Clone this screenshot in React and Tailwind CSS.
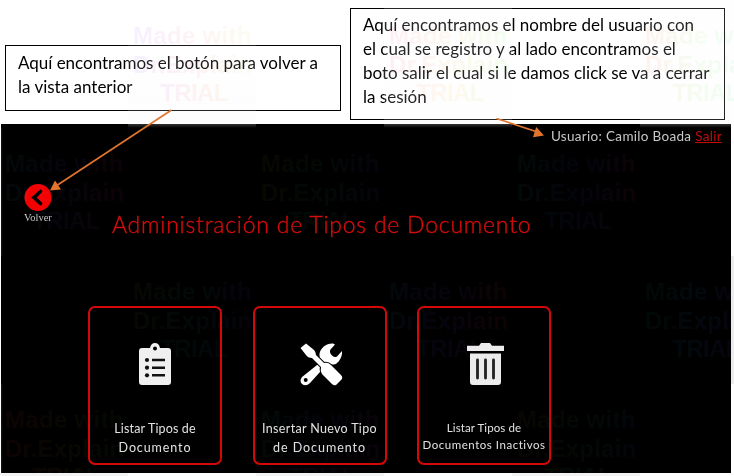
import React from 'react';

const marks = [
  'left-[133px] top-[22px] from-[#e9d8ff] via-[#ffe0e4] to-[#f4f8d8] opacity-40',
  'left-[389px] top-[22px] from-[#ffd9ec] via-[#fff0d4] to-[#dcffd9] opacity-40',
  'left-[645px] top-[22px] from-[#ffe1d8] via-[#e4ffdc] to-[#d8f0ff] opacity-40',
  'left-[5px] top-[150px] from-[#040b0c] via-[#07060e] to-[#10030a] opacity-80',
  'left-[261px] top-[150px] from-[#0a0a03] via-[#030b07] to-[#06050f] opacity-80',
  'left-[517px] top-[150px] from-[#030c08] via-[#05050f] to-[#10040a] opacity-80',
  'left-[133px] top-[278px] from-[#080b03] via-[#030b0b] to-[#07040f] opacity-80',
  'left-[389px] top-[278px] from-[#030a0e] via-[#090411] to-[#120404] opacity-80',
  'left-[645px] top-[278px] from-[#030c05] via-[#040913] to-[#10030c] opacity-80',
  'left-[5px] top-[406px] from-[#100504] via-[#0a0903] to-[#040c05] opacity-80',
  'left-[261px] top-[406px] from-[#030b08] via-[#05060f] to-[#0e040c] opacity-80',
  'left-[517px] top-[406px] from-[#0c0803] via-[#040b06] to-[#04070f] opacity-80',
];

function Watermark({ place }) {
  return (
    <div className={`absolute w-[122px] bg-linear-to-r bg-clip-text text-center font-['Liberation_Sans',sans-serif] text-[24px] leading-[28.6px] font-bold whitespace-nowrap text-transparent ${place}`}>
      <div className="text-left tracking-[0.3px]">Made with</div>
      <div className="text-left tracking-[0.2px]">Dr.Explain</div>
      <div className="tracking-[-0.6px]">TRIAL</div>
    </div>
  );
}

function Clipboard() {
  return (
    <svg width="32" height="42" viewBox="0 0 32 42">
      <path d="M3 5H11Q12 0 16 0T21 5H29Q32 5 32 8V39Q32 42 29 42H3Q0 42 0 39V8Q0 5 3 5Z" fill="#f0f0f0" />
      <circle cx="16" cy="5.5" r="2" />
      <g fill="#111">
        <circle cx="8" cy="17" r="2.1" /><circle cx="8" cy="24.7" r="2.1" /><circle cx="8" cy="32.3" r="2.1" />
        <path d="M13 15.8h13v2.4H13zM13 23.5h13v2.4H13zM13 31.1h13v2.4H13z" />
      </g>
    </svg>
  );
}

function Tools() {
  return (
    <svg className="ml-[4px]" width="43" height="43" viewBox="0 0 43 43">
      <path d="M33 .5C27 0 20 5 19.5 11C19.3 14 20.2 16 21.5 17.5L26 21Q31 22 36 21C40 18 42.5 13 42 8L37 13.5Q34 15 31.5 12Q29 9 30.5 6.5L35 1.5ZM17 22L2 34Q-1 38 2 41Q6 44 10 40L20 29V22Z" fill="white" />
      <circle cx="5.7" cy="37" r="2" />
      <path d="M6 .5L14 7Q16 9 16 12L24 20Q28 19 31 22L41 32Q43 34 42 36L36 42Q34 43 32 41L22 31Q20 28 21 24L12 15Q8 15 6 12L.5 5Z" fill="white" stroke="black" strokeWidth="2" paintOrder="stroke" />
    </svg>
  );
}

function Trash() {
  return (
    <svg className="ml-[2px]" width="37" height="42" viewBox="0 0 37 42">
      <path d="M0 2.8h12L14 0h9l2 2.8h12V8H0zM3 10.5h31V39q0 3-3 3H6q-3 0-3-3z" fill="#ececec" />
      <path d="M10.500 17v18M18.500 17v18M26.500 17v18" stroke="#222" strokeWidth="2.8" strokeLinecap="round" />
    </svg>
  );
}

function Card({ icon, children }) {
  return (
    <div className="flex h-[159px] w-[134px] flex-col items-center rounded-[7px] border-2 border-[#d40808] pt-[35px] text-[#e2e2e2]">
      <div className="h-[43px]">{icon}</div>
      {children}
    </div>
  );
}

export default function App() {
  return (
    <div className="relative h-[476px] w-[734px] overflow-hidden bg-white font-['Lato',sans-serif]">
      <div className="flex h-[124px] items-start gap-[9px] pl-[5px]">
        <div className="mt-[45px] h-[66px] w-[336px] border border-black pt-[5px] pl-[12px] text-[17px] leading-[24px] whitespace-nowrap text-black">
          <div className="tracking-[-0.02px]">Aquí encontramos el botón para volver a</div>
          <div className="tracking-[0px]">la vista anterior</div>
        </div>
        <div className="mt-[8px] h-[112px] w-[375px] border border-black pt-[4px] pl-[12px] text-[17px] leading-[24px] whitespace-nowrap text-black">
          <div className="tracking-[-0.03px]">Aquí encontramos el nombre del usuario con</div>
          <div className="tracking-[0px]">el cual se registro y al lado encontramos el</div>
          <div className="tracking-[-0.01px]">boto salir el cual si le damos click se va a cerrar</div>
          <div>la sesión</div>
        </div>
      </div>

      <div className="ml-px h-[349px] w-[730px] bg-black">
        <div className="flex h-[60px] justify-end pt-[3px] pr-[9px] text-[13.5px] leading-[18px] tracking-[0.31px] whitespace-nowrap text-[#c8c8c8]">
          <span>Usuario: Camilo Boada <a className="text-[#c40c0c] underline">Salir</a></span>
        </div>
        <div className="flex h-[122px]">
          <div className="flex w-[111px] flex-col pl-[23px]">
            <svg width="28" height="28" viewBox="0 0 28 28">
              <circle cx="14" cy="13.5" r="13.5" fill="#f30000" />
              <path d="M16.500 7.500L10 13.500L16.500 19.500" fill="none" stroke="black" strokeWidth="3.6" strokeLinecap="round" />
            </svg>
            <div className="font-['Liberation_Serif',serif] text-[10.5px] leading-[11px] text-[#c8c8c8]">Volver</div>
          </div>
          <h1 className="pt-[26px] text-[23px] leading-[28px] font-light tracking-[0.77px] whitespace-nowrap text-[#d80c0c] [-webkit-text-stroke:0.35px_#d80c0c]">Administración de Tipos de Documento</h1>
        </div>
        <div className="flex gap-[30.5px] pl-[87px]">
          <Card icon={<Clipboard />}>
            <div className="mt-[34px] text-center text-[12.5px] leading-[18.5px] whitespace-nowrap">
              <div className="tracking-[0.15px]">Listar Tipos de</div>
              <div className="tracking-[0.9px]">Documento</div>
            </div>
          </Card>
          <Card icon={<Tools />}>
            <div className="mt-[34px] text-center text-[12.5px] leading-[18.5px] whitespace-nowrap">
              <div className="tracking-[0.33px]">Insertar Nuevo Tipo</div>
              <div className="tracking-[0.95px]">de Documento</div>
            </div>
          </Card>
          <Card icon={<Trash />}>
            <div className="mt-[34px] text-center text-[11.5px] leading-[16.5px] whitespace-nowrap">
              <div className="tracking-[0.1px]">Listar Tipos de</div>
              <div className="tracking-[0.53px]">Documentos Inactivos</div>
            </div>
          </Card>
        </div>
      </div>

      <div className="absolute top-[40px] left-[128px] h-[84px] w-[128px] bg-linear-to-b from-white/10 to-[#f0f0f0]/15" />
      <div className="absolute top-0 left-[384px] h-[124px] w-[128px] bg-[#f8f8f8]/15" />
      <div className="absolute top-0 left-[640px] h-[124px] w-[94px] bg-[#f8f8f8]/15" />
      <div className="absolute top-[124px] left-[128px] h-[4px] w-[128px] bg-linear-to-b from-white/20 to-transparent" />
      <div className="absolute top-[124px] left-[384px] h-[4px] w-[128px] bg-linear-to-b from-white/20 to-transparent" />
      <div className="absolute top-[124px] left-[640px] h-[4px] w-[91px] bg-linear-to-b from-white/20 to-transparent" />
      <div className="absolute top-[128px] left-px h-[128px] w-[3px] bg-linear-to-r from-[#1c1c1c] to-black" />
      <div className="absolute top-[384px] left-px h-[89px] w-[3px] bg-linear-to-r from-[#1c1c1c] to-black" />
      <div className="absolute top-[256px] left-[731px] h-[128px] w-[3px] bg-[#ececec]" />
      <div className="absolute top-[473px] left-0 h-[3px] w-[128px] bg-[#f3f3f3]" />
      <div className="absolute top-[473px] left-[256px] h-[3px] w-[128px] bg-[#f3f3f3]" />
      <div className="absolute top-[473px] left-[512px] h-[3px] w-[128px] bg-[#f3f3f3]" />

      <div className="pointer-events-none absolute inset-0 overflow-hidden">
        <div className="absolute inset-0 mix-blend-multiply">
          {marks.slice(0, 3).map((m) => <Watermark key={m} place={m} />)}
        </div>
        <div className="absolute inset-0 mix-blend-lighten">
          {marks.slice(3).map((m) => <Watermark key={m} place={m} />)}
        </div>
      </div>

      <svg className="pointer-events-none absolute inset-0" width="734" height="476" viewBox="0 0 734 476">
        <g stroke="#e2752c" strokeWidth="1.7" fill="#e2752c">
          <path d="M171.500 110L56 186M496.500 118.500L536 131.500" />
          <path stroke="none" d="M50 190.500L55 180.500L61 189.500ZM544 135.500L533 137.300L536.200 127Z" />
        </g>
      </svg>
    </div>
  );
}
